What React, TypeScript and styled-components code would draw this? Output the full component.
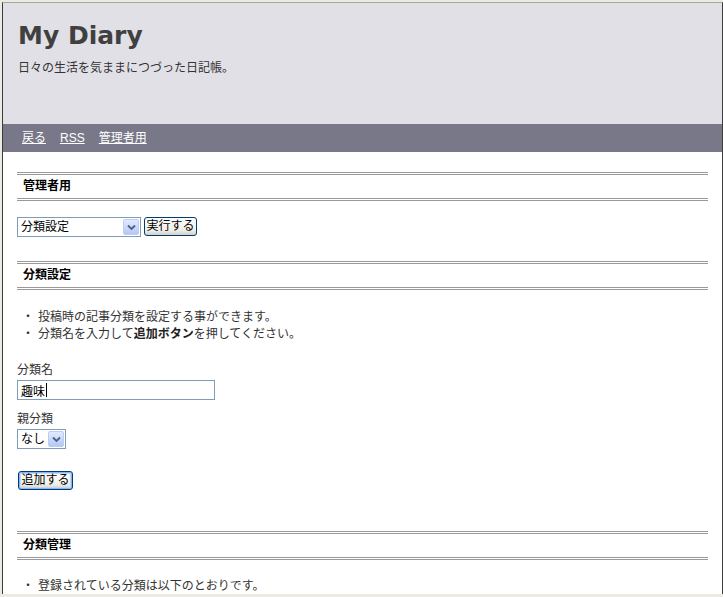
import * as React from 'react';
import styled, { createGlobalStyle } from 'styled-components';

const GlobalStyle = createGlobalStyle`
  html, body {
    margin: 0;
    padding: 0;
    background: #ebebe4;
  }
  body {
    font-family: "Liberation Sans", "Noto Sans CJK JP", sans-serif;
    font-size: 12px;
    color: #333;
  }
`;

const Frame = styled.div`
  box-sizing: border-box;
  margin: 2px 0 0 2px;
  height: 592px;
  overflow: hidden;
  background: #fff;
  border-top: 1px solid #aca899;
  border-left: 1px solid #3c3c3c;
  border-right: 1px solid #3c3c3c;
`;

const Header = styled.header`
  box-sizing: border-box;
  height: 121px;
  padding: 18px 15px 0;
  background: #e0e0e6;
`;

const Title = styled.h1`
  margin: 0;
  font-family: "DejaVu Sans", Verdana, sans-serif;
  font-size: 25px;
  line-height: 30px;
  font-weight: bold;
  color: #404040;
`;

const Tagline = styled.p`
  margin: 9px 0 0;
  line-height: 16px;
  color: #333;
`;

const Nav = styled.nav`
  display: flex;
  gap: 14px;
  height: 28px;
  padding-left: 19px;
  align-items: center;
  background: #787888;
`;

const NavLink = styled.a`
  color: #fff;
  text-decoration: underline;
  line-height: 16px;
`;

const Content = styled.main`
  padding: 20px 14px 0;
`;

const SectionTitle = styled.h2<{ $gap?: number }>`
  margin: ${p => p.$gap ?? 0}px 0 0;
  padding-left: 6px;
  height: 23px;
  line-height: 23px;
  font-size: 12px;
  font-weight: bold;
  color: #000;
  border-top: 3px double #999;
  border-bottom: 3px double #999;
`;

const Row = styled.div<{ $gap: number }>`
  display: flex;
  align-items: flex-start;
  gap: 3px;
  margin-top: ${p => p.$gap}px;
`;

const SelectWrap = styled.div<{ $width: number }>`
  position: relative;
  width: ${p => p.$width}px;
  height: 20px;
`;

const Select = styled.select`
  box-sizing: border-box;
  appearance: none;
  width: 100%;
  height: 100%;
  margin: 0;
  padding: 0 20px 0 3px;
  border: 1px solid #7f9db9;
  border-radius: 0;
  background: #fff;
  font: inherit;
  font-size: 12px;
  color: #000;
  outline: none;
`;

const DropButton = styled.span`
  position: absolute;
  top: 2px;
  right: 2px;
  width: 16px;
  height: 16px;
  box-sizing: border-box;
  display: flex;
  align-items: center;
  justify-content: center;
  border: 1px solid #b9cdf6;
  border-radius: 2px;
  background: linear-gradient(#e2eafe, #b4c8f6);
  pointer-events: none;
`;

const XpButton = styled.button<{ $width: number; $default?: boolean }>`
  box-sizing: border-box;
  width: ${p => p.$width}px;
  height: 19px;
  margin: 0 0 0 ${p => (p.$default ? 1 : 0)}px;
  padding: 0;
  font: inherit;
  font-size: 12px;
  line-height: 15px;
  color: #000;
  border: 1px solid #003c74;
  border-radius: 3px;
  background: linear-gradient(#ffffff, #f0f0ea 70%, #d6d0c5);
  box-shadow: ${p => (p.$default ? 'inset 0 0 0 1px #8cb4f2, inset 0 0 0 2px #c5d7f7' : 'none')};
`;

const Notes = styled.ul<{ $gap: number }>`
  list-style: none;
  margin: ${p => p.$gap}px 0 0;
  padding: 0;
`;

const Note = styled.li`
  display: flex;
  padding-left: 5px;
  line-height: 17px;
  color: #333;
  b {
    color: #222;
  }
`;

const Bullet = styled.span`
  width: 12px;
  margin-right: 4px;
  text-align: center;
`;

const Field = styled.div<{ $gap: number }>`
  margin-top: ${p => p.$gap}px;
`;

const Label = styled.label<{ $space: number }>`
  display: block;
  line-height: 17px;
  margin-bottom: ${p => p.$space}px;
  color: #333;
`;

const InputWrap = styled.div`
  position: relative;
  width: 198px;
`;

const TextInput = styled.input`
  box-sizing: border-box;
  display: block;
  width: 198px;
  height: 20px;
  margin: 0;
  padding: 0 3px;
  border: 1px solid #7f9db9;
  font: inherit;
  font-size: 12px;
  color: #000;
  outline: none;
  caret-color: transparent;
`;

const Caret = styled.span`
  position: absolute;
  left: 29px;
  top: 3px;
  width: 1px;
  height: 14px;
  background: #000;
`;

const Chevron = () => (
  <svg width="9" height="7" viewBox="0 0 9 7">
    <path d="M1 1.5 L4.5 5 L8 1.5" fill="none" stroke="#4d6185" strokeWidth="1.8" />
  </svg>
);

const Dropdown = ({ width, options }: { width: number; options: string[] }) => (
  <SelectWrap $width={width}>
    <Select defaultValue={options[0]}>
      {options.map(o => <option key={o}>{o}</option>)}
    </Select>
    <DropButton><Chevron /></DropButton>
  </SelectWrap>
);

const App = (): React.ReactElement => (
  <>
    <GlobalStyle />
    <Frame>
      <Header>
        <Title>My Diary</Title>
        <Tagline>日々の生活を気ままにつづった日記帳。</Tagline>
      </Header>
      <Nav>
        <NavLink href="#">戻る</NavLink>
        <NavLink href="#">RSS</NavLink>
        <NavLink href="#">管理者用</NavLink>
      </Nav>
      <Content>
        <SectionTitle>管理者用</SectionTitle>
        <Row $gap={16}>
          <Dropdown width={124} options={['分類設定']} />
          <XpButton $width={53}>実行する</XpButton>
        </Row>

        <SectionTitle $gap={24}>分類設定</SectionTitle>
        <Notes $gap={19}>
          <Note><Bullet>・</Bullet>投稿時の記事分類を設定する事ができます。</Note>
          <Note><Bullet>・</Bullet><span>分類名を入力して<b>追加ボタン</b>を押してください。</span></Note>
        </Notes>
        <Field $gap={19}>
          <Label $space={1}>分類名</Label>
          <InputWrap>
            <TextInput defaultValue="趣味" />
            <Caret />
          </InputWrap>
        </Field>
        <Field $gap={11}>
          <Label $space={1}>親分類</Label>
          <Dropdown width={49} options={['なし']} />
        </Field>
        <Row $gap={22}>
          <XpButton $width={55} $default>追加する</XpButton>
        </Row>

        <SectionTitle $gap={41}>分類管理</SectionTitle>
        <Notes $gap={18}>
          <Note><Bullet>・</Bullet>登録されている分類は以下のとおりです。</Note>
        </Notes>
      </Content>
    </Frame>
  </>
);

export default App;
